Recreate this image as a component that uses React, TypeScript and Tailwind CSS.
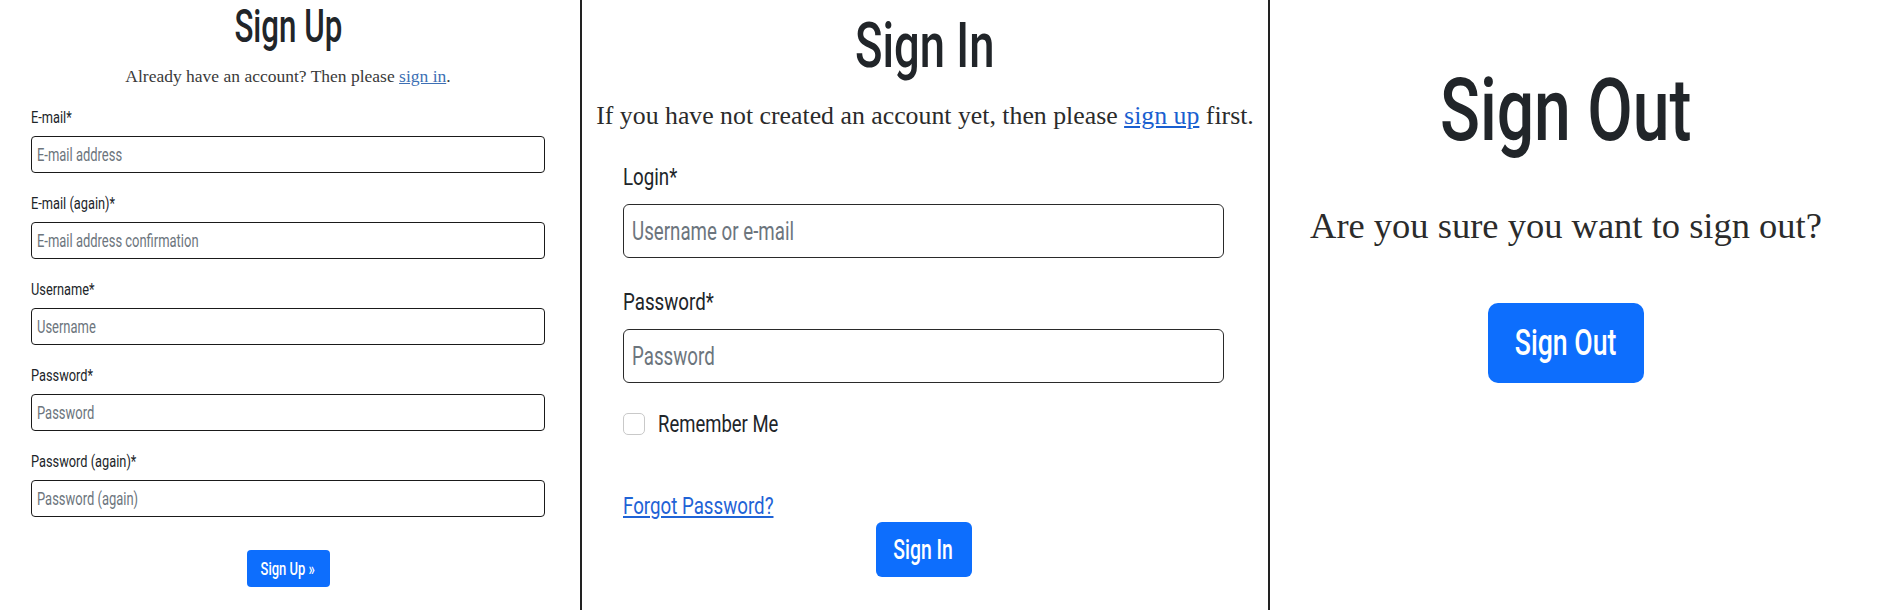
import React from 'react';

// no condensed face is installed, so the Oswald-like look is Roboto squeezed on x
const cond = "font-['Roboto','Liberation_Sans',sans-serif] font-medium";
const serif = "font-['Liberation_Serif','DejaVu_Serif',serif]";

const signUpFields = [
    { id: 'email', label: 'E-mail*', placeholder: 'E-mail address', type: 'email' },
    { id: 'email2', label: 'E-mail (again)*', placeholder: 'E-mail address confirmation', type: 'email' },
    { id: 'username', label: 'Username*', placeholder: 'Username', type: 'text' },
    { id: 'password1', label: 'Password*', placeholder: 'Password', type: 'password' },
    { id: 'password2', label: 'Password (again)*', placeholder: 'Password (again)', type: 'password' }
];

function SignUp() {
    return (
        <section className="w-[582px] shrink-0 border-r-2 border-[#222] pl-[31px] pr-[35px]">
            <h1 className={`${cond} mt-[2px] text-center text-[46px] leading-[48px] text-[#212529]`}>
                <span className="inline-block origin-center scale-x-[0.68]">Sign Up</span>
            </h1>
            <p className={`${serif} mt-[14px] text-center text-[17.5px] leading-[24px] text-[#3a3a3a]`}>
                Already have an account? Then please{' '}
                <a href="#" className="text-[#3d6fb4] underline">sign in</a>.
            </p>
            <form className="mt-[18px]" onSubmit={(e) => e.preventDefault()}>
                {signUpFields.map((field) => (
                    <div key={field.id} className="mb-[19px]">
                        <label
                            htmlFor={field.id}
                            className={`${cond} mb-[6px] block text-[16px] leading-[24px] font-normal text-[#212529]`}
                        >
                            <span className="inline-block origin-left scale-x-[0.8]">{field.label}</span>
                        </label>
                        <div className="relative">
                            <input
                                id={field.id}
                                type={field.type}
                                aria-label={field.placeholder}
                                className="block h-[37px] w-full rounded-[4px] border border-[#1a1a1a] bg-white"
                            />
                            <span
                                className={`${cond} pointer-events-none absolute left-[6px] top-0 inline-block origin-left scale-x-[0.72] text-[18px] leading-[37px] font-normal text-[#6c757d]`}
                            >
                                {field.placeholder}
                            </span>
                        </div>
                    </div>
                ))}
                <div className="flex justify-center pt-[14px]">
                    <button
                        type="submit"
                        className={`${cond} h-[37px] w-[83px] rounded-[4px] bg-[#0d6efd] text-[18px] text-white`}
                    >
                        <span className="inline-block origin-center scale-x-[0.72]">Sign Up »</span>
                    </button>
                </div>
            </form>
        </section>
    );
}

function SignIn() {
    return (
        <section className="w-[688px] shrink-0 border-r-2 border-[#222]">
            <h1 className={`${cond} mt-[14px] text-center text-[63px] leading-[64px] text-[#212529]`}>
                <span className="inline-block origin-center scale-x-[0.72]">Sign In</span>
            </h1>
            <p className={`${serif} mt-[20px] text-center text-[25.8px] leading-[36px] text-[#2b2b2b]`}>
                If you have not created an account yet, then please{' '}
                <a href="#" className="text-[#1a5fd0] underline">sign up</a> first.
            </p>
            <form className="mt-[27px] pl-[41px] pr-[44px]" onSubmit={(e) => e.preventDefault()}>
                <label htmlFor="login" className={`${cond} mb-[11px] block text-[24px] leading-[32px] font-normal text-[#212529]`}>
                    <span className="inline-block origin-left scale-x-[0.78]">Login*</span>
                </label>
                <div className="relative">
                    <input
                        id="login"
                        type="text"
                        aria-label="Username or e-mail"
                        className="block h-[54px] w-full rounded-[6px] border-[1.5px] border-[#2a2a2a] bg-white"
                    />
                    <span
                        className={`${cond} pointer-events-none absolute left-[9px] top-0 inline-block origin-left scale-x-[0.72] text-[26px] leading-[54px] font-normal text-[#6c757d]`}
                    >
                        Username or e-mail
                    </span>
                </div>
                <label htmlFor="password" className={`${cond} mt-[28px] mb-[11px] block text-[24px] leading-[32px] font-normal text-[#212529]`}>
                    <span className="inline-block origin-left scale-x-[0.78]">Password*</span>
                </label>
                <div className="relative">
                    <input
                        id="password"
                        type="password"
                        aria-label="Password"
                        className="block h-[54px] w-full rounded-[6px] border-[1.5px] border-[#2a2a2a] bg-white"
                    />
                    <span
                        className={`${cond} pointer-events-none absolute left-[9px] top-0 inline-block origin-left scale-x-[0.72] text-[26px] leading-[54px] font-normal text-[#6c757d]`}
                    >
                        Password
                    </span>
                </div>
                <label className="mt-[25px] flex h-[32px] items-center gap-[13px]">
                    <input
                        type="checkbox"
                        className="h-[22px] w-[22px] appearance-none rounded-[5px] border border-[#c9c9c9] bg-white"
                    />
                    <span className={`${cond} inline-block origin-left scale-x-[0.77] text-[24px] leading-[32px] font-normal text-[#212529]`}>
                        Remember Me
                    </span>
                </label>
                <a
                    href="#"
                    className={`${cond} mt-[52px] block w-fit origin-left scale-x-[0.78] text-[24px] leading-[28px] font-normal text-[#1f63d6] underline`}
                >
                    Forgot Password?
                </a>
                <div className="mt-[2px] flex justify-center">
                    <button
                        type="submit"
                        className={`${cond} h-[55px] w-[96px] rounded-[6px] bg-[#0d6efd] text-[28px] text-white`}
                    >
                        <span className="inline-block origin-center scale-x-[0.69]">Sign In</span>
                    </button>
                </div>
            </form>
        </section>
    );
}

function SignOut() {
    return (
        <section className="flex flex-1 flex-col items-center pr-[19px]">
            <h1 className={`${cond} mt-[66px] text-[88px] leading-[88px] text-[#212529]`}>
                <span className="inline-block origin-center scale-x-[0.75]">Sign Out</span>
            </h1>
            <p className={`${serif} mt-[48px] text-[36.5px] leading-[48px] text-[#2b2b2b]`}>
                Are you sure you want to sign out?
            </p>
            <button
                type="button"
                className={`${cond} mt-[53px] h-[80px] w-[156px] rounded-[10px] bg-[#0d6efd] text-[36px] text-white`}
            >
                <span className="inline-block origin-center scale-x-[0.74]">Sign Out</span>
            </button>
        </section>
    );
}

export default function App() {
    return (
        <div className="flex h-[610px] w-full overflow-hidden bg-white">
            <SignUp />
            <SignIn />
            <SignOut />
        </div>
    );
}
